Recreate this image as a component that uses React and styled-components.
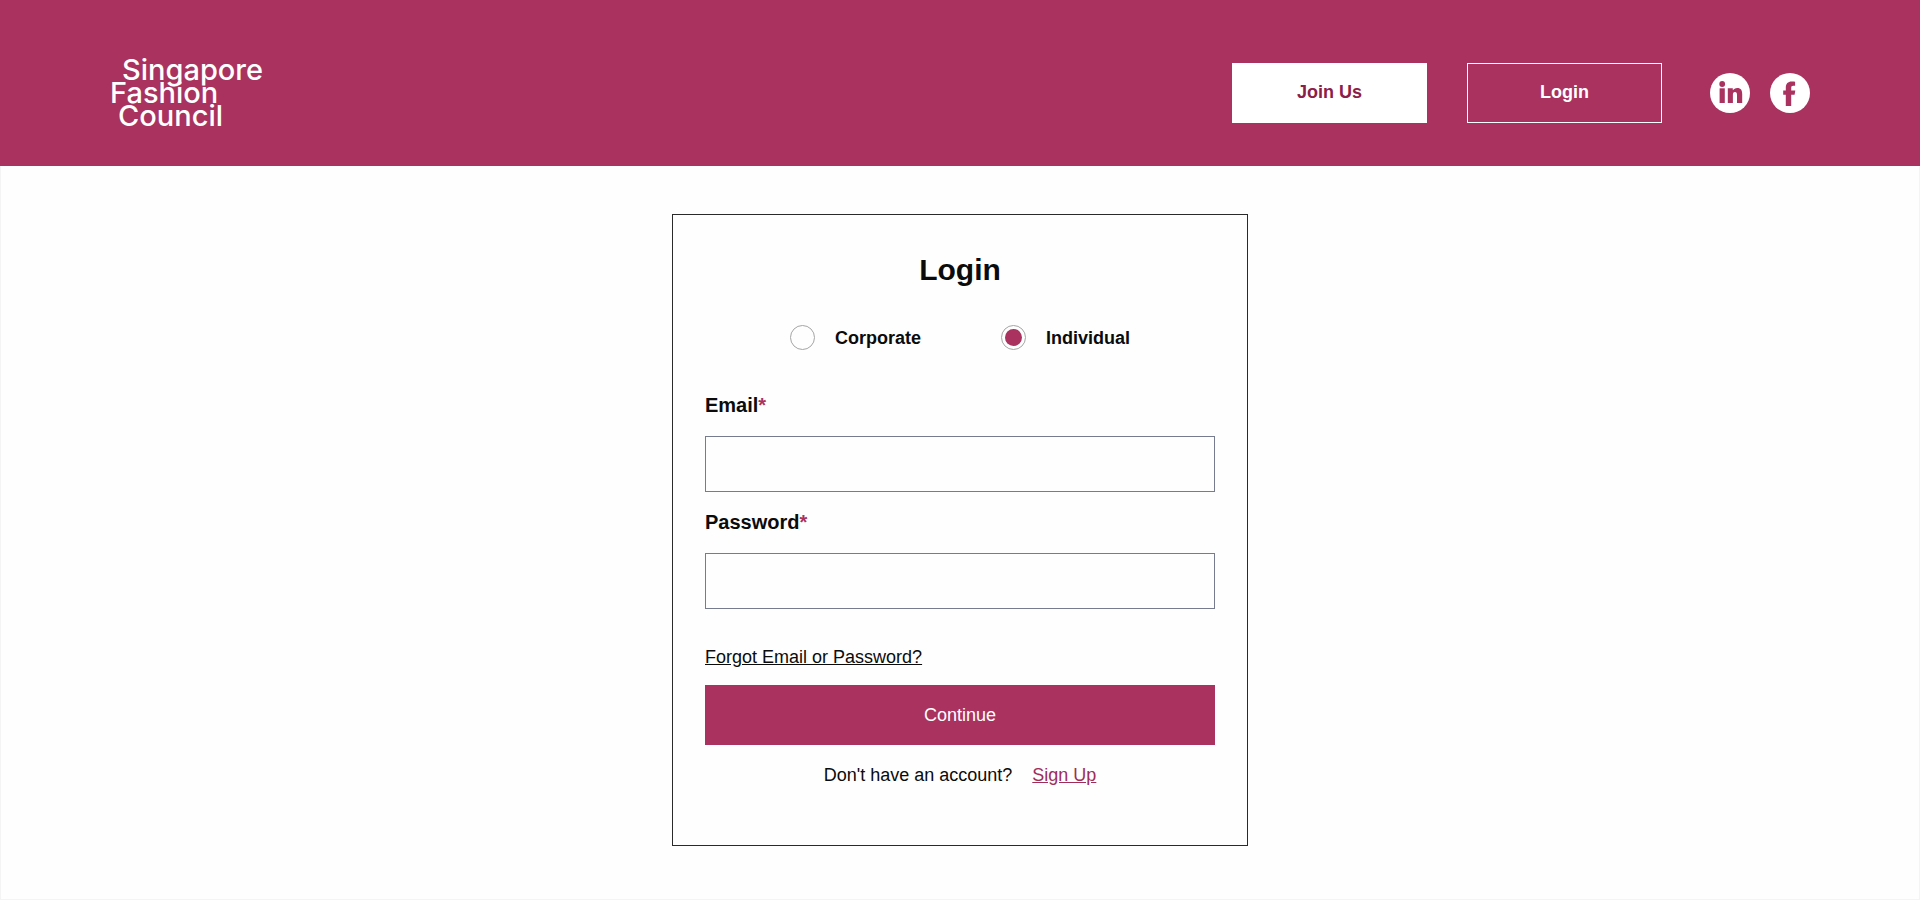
import React, { useState } from "react";
import styled, { createGlobalStyle } from "styled-components";

const GlobalStyle = createGlobalStyle`
    * {
        box-sizing: border-box;
    }

    body {
        margin: 0;
        background-color: #fefefe;
        color: #0b0b0b;
        font-family: "Liberation Sans", Arial, sans-serif;
        font-size: 18px;
        line-height: 24px;
    }
`;

const Page = styled.div`
    min-height: 100vh;
    display: flex;
    flex-direction: column;
`;

const Header = styled.header`
    display: flex;
    justify-content: space-between;
    align-items: flex-start;
    padding: 58px 110px 39px;
    background-color: #a9325f;
`;

const Logo = styled.a`
    display: flex;
    flex-direction: column;
    color: white;
    font-family: Inter, sans-serif;
    font-size: 29px;
    font-weight: 500;
    line-height: 23px;
    text-decoration: none;
`;

const LogoLine = styled.span`
    padding-left: ${({ $indent }) => $indent}px;
`;

const Actions = styled.div`
    display: flex;
    align-items: center;
    gap: 40px;
    padding-top: 5px;
`;

const HeaderButton = styled.button`
    width: 195px;
    height: 60px;
    padding: 0 0 2px;
    border: 1px solid white;
    background-color: ${({ $filled }) => ($filled ? "white" : "transparent")};
    color: ${({ $filled }) => ($filled ? "#8a2048" : "white")};
    font: inherit;
    font-weight: bold;
    cursor: pointer;
`;

const Socials = styled.div`
    display: flex;
    gap: 20px;
    padding-left: 8px;
`;

const SocialLink = styled.a`
    display: flex;
    border-radius: 50%;
    background-color: white;
    color: #a9325f;
`;

const Main = styled.main`
    flex: 1;
    display: flex;
    justify-content: center;
    align-items: flex-start;
    padding: 48px 24px;
    border: 1px solid #f4f4f4;
    border-top: none;
`;

const Card = styled.form`
    width: 30vw;
    min-width: 480px;
    display: flex;
    flex-direction: column;
    padding: 37px 32px 58px;
    border: 1px solid #2a2a2a;
`;

const Title = styled.h1`
    margin: 0;
    font-size: 30px;
    line-height: 36px;
    text-align: center;
`;

const RadioGroup = styled.div`
    display: flex;
    justify-content: center;
    gap: 80px;
    margin: 37px 0 43px;
`;

const RadioLabel = styled.label`
    display: flex;
    align-items: center;
    gap: 20px;
    font-weight: bold;
    cursor: pointer;
`;

const Radio = styled.input`
    appearance: none;
    width: 25px;
    height: 25px;
    margin: 0;
    padding: 3px;
    border: 1px solid #a5a5a5;
    border-radius: 50%;
    background-clip: content-box;

    &:checked {
        background-color: #a9325f;
    }
`;

const Field = styled.div`
    display: flex;
    flex-direction: column;
    gap: 19px;
    margin-bottom: 18px;
`;

const FieldLabel = styled.label`
    font-size: 20px;
    font-weight: bold;
`;

const Required = styled.span`
    color: #a9325f;
`;

const TextInput = styled.input`
    height: 56px;
    padding: 0 16px;
    border: 1px solid #777b90;
    background-color: #fefefe;
    font: inherit;
`;

const ForgotLink = styled.a`
    align-self: flex-start;
    margin: 18px 0 16px;
    color: #0b0b0b;
`;

const SubmitButton = styled.button`
    height: 60px;
    border: none;
    background-color: #a9325f;
    color: white;
    font: inherit;
    cursor: pointer;
`;

const SignUpRow = styled.p`
    display: flex;
    justify-content: center;
    gap: 20px;
    margin: 18px 0 0;
`;

const SignUpLink = styled.a`
    color: #a02d58;
`;

const LinkedInIcon = () => (
    <svg width="40" height="40" viewBox="0 0 40 40" fill="currentColor" aria-hidden="true">
        <circle cx="12.2" cy="11" r="2.9" />
        <path d="M9.6 15.3h5.2V30H9.6z" />
        <path d="M17.8 15.3h5v2c.9-1.5 2.5-2.4 4.5-2.4 3.6 0 4.9 2.3 4.9 6V30H27v-7.9c0-1.9-.5-3-2-3-1.6 0-2.1 1.2-2.1 3V30h-5.1z" />
    </svg>
);

const FacebookIcon = () => (
    <svg width="40" height="40" viewBox="0 0 40 40" fill="currentColor" aria-hidden="true">
        <path d="M15.8 33V21.8h-2.6v-4.3h2.6v-2.8c0-4 2.1-6.2 5.9-6.2 1.3 0 2.6.1 3.4.3v4h-1.9c-1.5 0-2 .8-2 2.1v2.6h4.1l-.7 4.3h-3.4V33z" />
    </svg>
);

const App = () => {
    const [accountType, setAccountType] = useState("individual");

    return (
        <>
            <GlobalStyle />
            <Page>
                <Header>
                    <Logo href="#home">
                        <LogoLine $indent={12}>Singapore</LogoLine>
                        <LogoLine $indent={0}>Fashion</LogoLine>
                        <LogoLine $indent={8}>Council</LogoLine>
                    </Logo>
                    <Actions>
                        <HeaderButton type="button" $filled>
                            Join Us
                        </HeaderButton>
                        <HeaderButton type="button">Login</HeaderButton>
                        <Socials>
                            <SocialLink href="#linkedin" aria-label="LinkedIn">
                                <LinkedInIcon />
                            </SocialLink>
                            <SocialLink href="#facebook" aria-label="Facebook">
                                <FacebookIcon />
                            </SocialLink>
                        </Socials>
                    </Actions>
                </Header>
                <Main>
                    <Card onSubmit={(e) => e.preventDefault()}>
                        <Title>Login</Title>
                        <RadioGroup role="radiogroup" aria-label="Account type">
                            <RadioLabel>
                                <Radio
                                    type="radio"
                                    name="accountType"
                                    checked={accountType === "corporate"}
                                    onChange={() => setAccountType("corporate")}
                                />
                                Corporate
                            </RadioLabel>
                            <RadioLabel>
                                <Radio
                                    type="radio"
                                    name="accountType"
                                    checked={accountType === "individual"}
                                    onChange={() => setAccountType("individual")}
                                />
                                Individual
                            </RadioLabel>
                        </RadioGroup>
                        <Field>
                            <FieldLabel htmlFor="email">
                                Email<Required>*</Required>
                            </FieldLabel>
                            <TextInput id="email" type="email" />
                        </Field>
                        <Field>
                            <FieldLabel htmlFor="password">
                                Password<Required>*</Required>
                            </FieldLabel>
                            <TextInput id="password" type="password" />
                        </Field>
                        <ForgotLink href="#forgot">Forgot Email or Password?</ForgotLink>
                        <SubmitButton type="submit">Continue</SubmitButton>
                        <SignUpRow>
                            Don't have an account?
                            <SignUpLink href="#signup">Sign Up</SignUpLink>
                        </SignUpRow>
                    </Card>
                </Main>
            </Page>
        </>
    );
};

export default App;
